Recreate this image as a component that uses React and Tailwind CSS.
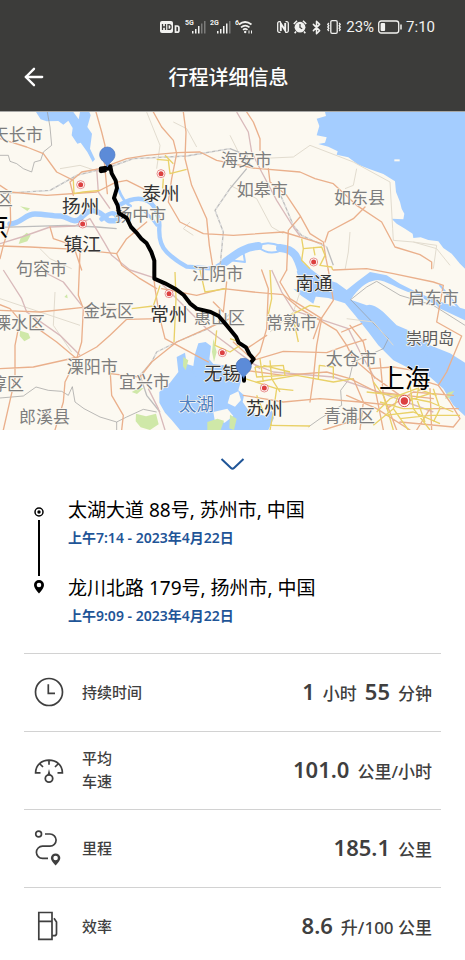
import { ArrowLeft, Bluetooth } from "lucide-react";

const cjk = "font-['Noto_Sans','Noto_Sans_CJK_SC',sans-serif]";

const labels = [
  { text: "天长市", x: -25, y: 68, kind: "county" },
  { text: "海安市", x: 662, y: 142, kind: "county" },
  { text: "如皋市", x: 710, y: 232, kind: "county" },
  { text: "如东县", x: 1002, y: 256, kind: "county" },
  { text: "区", x: -13, y: 260, kind: "county" },
  { text: "扬中市", x: 346, y: 307, kind: "county" },
  { text: "句容市", x: 48, y: 471, kind: "county" },
  { text: "江阴市", x: 577, y: 485, kind: "county" },
  { text: "溧水区", x: -18, y: 632, kind: "county" },
  { text: "金坛区", x: 249, y: 595, kind: "county" },
  { text: "惠山区", x: 582, y: 617, kind: "county" },
  { text: "常熟市", x: 798, y: 631, kind: "county" },
  { text: "启东市", x: 1223, y: 557, kind: "county" },
  { text: "太仓市", x: 977, y: 740, kind: "county" },
  { text: "溧阳市", x: 200, y: 764, kind: "county" },
  { text: "宜兴市", x: 357, y: 809, kind: "county" },
  { text: "淳区", x: -30, y: 814, kind: "county" },
  { text: "郎溪县", x: 57, y: 915, kind: "county" },
  { text: "青浦区", x: 972, y: 911, kind: "county" },
  { text: "崇明岛", x: 1218, y: 677, kind: "island" },
  { text: "太湖", x: 536, y: 877, kind: "lake" },
  { text: "扬州", x: 186, y: 281, kind: "city" },
  { text: "泰州", x: 427, y: 244, kind: "city" },
  { text: "镇江", x: 191, y: 397, kind: "city" },
  { text: "常州", x: 451, y: 606, kind: "city" },
  { text: "南通", x: 886, y: 512, kind: "city" },
  { text: "无锡", x: 611, y: 784, kind: "city" },
  { text: "苏州", x: 737, y: 889, kind: "city" },
  { text: "京", x: -51, y: 342, kind: "metro" },
  { text: "上海", x: 1137, y: 799, kind: "metro" },
];

const labelStyle = {
  county: "fill-[#7d7d7d] text-[51px]",
  island: "fill-[#5c5c5c] text-[48px]",
  lake: "fill-[#4f7fc0] text-[53px]",
  city: "fill-[#333333] text-[56px]",
  metro: "fill-black text-[77px]",
};

const cities = [
  [242, 218],
  [483, 185],
  [248, 336],
  [941, 450],
  [507, 545],
  [667, 722],
  [793, 828],
];

const Pin = ({ x, y }) => (
  <g transform={`translate(${x} ${y})`}>
    <path
      d="M0 0C-3-13-23-19-23-37A23 23 0 0 1 23-37C23-19 3-13 0 0Z"
      fill="#5c8bd8"
      stroke="#4a76bf"
      strokeWidth="2"
    />
  </g>
);

const TripMap = () => (
  <svg viewBox="0 0 1395 954" className="block w-full bg-[#fcf9f1]" role="img">
    {/* sea, rivers and lakes */}
    <g fill="#a4cdff">
      <path d="M975 0L978 12 950 20 958 42 950 70 980 76 975 92 955 96 985 104 1013 118 1010 128 1045 136 1075 158 1110 172 1150 186 1185 208 1188 240 1200 270 1205 290 1213 305 1210 322 1175 320 1190 335 1215 350 1238 365 1240 378 1262 376 1285 384 1315 388 1330 408 1355 425 1380 455 1395 470V0Z" />
      <path d="M108 0L122 22 140 28 175 27 190 38 205 26 218 48 215 70 232 95 242 92 262 120 278 150 285 142 270 110 276 65 262 45 272 10 268 0 240 0 236 22 220 0Z" />
      <path d="M893 440L910 474 890 478 905 530 930 552 985 558 1035 574 1065 610 1105 660 1135 700 1180 745 1230 770 1290 795 1330 830 1360 880 1395 912V752L1350 724 1290 700 1250 665 1190 640 1150 600 1110 560 1090 535 1130 508 1160 515 1200 535 1250 548 1310 585 1395 625V592L1330 572 1260 545 1200 515 1160 490 1110 480 1070 510 1040 534 1010 512 970 500Z" />
      <path d="M530 735L555 722 560 756 580 762 585 726 595 694 617 690 633 702 628 742 640 756 690 762 730 780 722 810 715 835 732 850 728 870 745 895 765 905 800 912 815 895 822 918 805 954H540L515 924 495 902 478 872 478 840 510 812 535 780Z" />
      <path d="M1245 717L1270 722 1290 736 1275 738ZM880 530L950 545 940 575 905 552Z" />
    </g>
    <path d="M1183 142h16v6h-16Z" fill="#fcf9f1" />
    <g fill="#fcf9f1">
      <path d="M1052 563C1075 530 1095 510 1130 504C1160 505 1190 530 1240 545L1310 580 1340 620 1380 650 1350 705C1290 694 1240 660 1190 630C1150 600 1120 570 1100 580Z" />
      <path d="M690 850l25-12 8 26-18 20-22-10ZM640 900l42-10 18 22-26 20-30-8ZM792 410l38-12 20 14-28 16Z" />
    </g>
    <g fill="none" stroke="#a4cdff" strokeLinecap="round" strokeLinejoin="round">
      <path strokeWidth="16" d="M30 336C65 334 75 306 105 306S160 313 180 312 220 338 240 320 270 285 300 303 310 330 350 326" />
      <path strokeWidth="13" d="M305 322Q340 290 350 314T360 278Q400 255 430 262T470 300 478 345Q475 395 500 420T560 464L640 470 690 440" />
      <path strokeWidth="8" d="M355 230Q370 270 392 282M302 320L360 325M470 340Q450 310 430 295" />
      <path strokeWidth="24" d="M676 450C715 420 740 404 775 402M840 408C885 412 892 435 905 478" />
      <path strokeWidth="6" d="M775 402Q800 385 842 402M775 405Q805 432 845 415M690 445L735 450 730 420M588 790L570 770M1320 520L1390 605" />
    </g>
    <g fill="#cfe8a8">
      <path d="M60 283l30 6-8 8ZM62 378l18-16 12 8-10 18-26 8ZM60 656l25 8 6 14-18 10-14-16ZM550 735l15 10-8 30-8-12ZM395 840l18-10 18-2-20 18ZM408 905l30 8 30-8 8 32-26 17-28-8-15-18ZM622 930l30-10 20 6-10 28h-40ZM640 680l10 40-8 30-6-30ZM690 908l20 12-8 34-14-5ZM1335 860l8-18 20-6-15 22ZM193 555l8-8 2 12Z" />
    </g>

    {/* boundaries and minor roads */}
    <g fill="none" strokeLinejoin="round">
      <path stroke="#999" strokeWidth="2" d="M142 0L150 45 155 100 130 120 122 145 103 150 95 180 70 170 50 155 30 148 25 130 0 130M0 858L70 852 108 825 145 835 185 838 205 850 217 824 225 870 252 890 300 915 350 930 380 915 430 892 470 900M350 930L350 954M1052 563L1100 525 1130 508M1052 563L1165 680 1150 710M1130 508L1200 550 1300 580 1395 640M1150 710L1060 750 1048 800 1022 835 1025 880 960 920 925 945" />
      <path stroke="#e2dccf" strokeWidth="3" d="M770 140L880 135 930 100 1060 150 1170 210 1178 350 1180 385 1240 390 1310 410 1350 460M1070 170L1060 220 1035 230M690 220L770 260 815 345 850 365M1050 360L1045 420 1035 474M570 330L550 350 580 370M165 540L160 640 215 720M520 30L560 50 590 105M180 170L240 160 300 180M690 70L720 130 760 170M120 410L150 440 215 470M0 560L90 590 240 640M1040 620L1120 630 1180 700M810 660L880 600 900 540M440 0L480 100 470 170M1240 390L1310 400 1300 470" />
      <path stroke="#bdbdbd" strokeWidth="4" d="M0 245L150 235 230 190 330 165 400 140 560 132 690 110 740 130 750 160M0 346L200 340 290 345 350 350M660 465L670 360 645 295 690 230 740 170M420 790L455 750 470 720 530 690 625 650 700 600M420 790L440 850 480 900M840 245L880 340 905 370 980 405 1000 460" />
      <path stroke="#fff" strokeWidth="2" strokeDasharray="9 9" d="M0 245L150 235 230 190 330 165 400 140 560 132 690 110M660 465L670 360 645 295 690 230M420 790L455 750 470 720 530 690 625 650 700 600M840 245L880 340 905 370 980 405" />
      <path stroke="#d9babb" strokeWidth="4" d="M0 395L65 375 150 345 225 342 270 320 315 395 335 430 390 474 470 500 540 570 620 650 780 770M10 474L65 560 80 600 180 670 240 730M120 474L190 510 245 580M710 0L745 60 755 120 785 180 830 265 880 345 900 372M815 474L845 540 880 595 1045 650 1080 720 1125 800M720 740L820 780 1000 795 1150 845 1300 900M445 830L475 890 495 954M290 170L295 240 330 290" />
    </g>

    {/* motorways */}
    <g fill="none" stroke="#eab08c" strokeWidth="4" strokeLinejoin="round" strokeLinecap="round">
      <path d="M288 0L305 60 315 100 313 150 322 245M0 80L80 105 130 125 170 180 220 205M460 0L485 45 520 85 530 125 515 200 505 270 540 330 610 365 700 370 850 360 965 395M550 0L558 60 555 140 575 220 620 320 628 400 640 474" />
      <path d="M0 220L30 240 140 250 290 240 345 212 380 205 440 235M220 250L210 210 245 180 300 170 380 140 440 130 530 122 600 120 650 145 760 168 900 180 945 200 1000 215 1070 280 1145 330 1185 405 1260 428 1295 450 1295 470" />
      <path d="M740 0L760 30 780 80 780 115M805 170L810 210 860 250 900 310 930 365 970 390 978 440 985 474M1095 285L1060 320 985 360 975 390M900 315L865 355 860 474M150 345L160 380 220 400 245 474M0 402L90 405 230 412 350 425 365 460M365 460L420 500 470 530M440 330L380 380 350 425M30 250L32 330 10 400 0 440" />
      <path d="M0 578L30 590 60 625 45 700 45 800 10 954M240 420L235 550 250 590 245 690 230 740 195 810 190 870 165 954M0 595L120 600 250 586 350 590M480 620L380 622 330 670 290 705 235 735 100 765 0 770M330 770L335 850 370 910 365 954M330 785L420 795 455 750 530 690 620 650 690 620M100 640L170 690 230 740" />
      <path d="M460 480L465 530 480 620 495 680 560 715 625 750M485 530L590 550 670 530 760 540 850 548 900 590 960 625 1010 655 1040 700 1060 740M785 474L805 530 800 650 780 720 735 770M860 474L840 510 870 560 965 620 950 700 940 800 930 870" />
      <path d="M700 690L760 745 850 718 980 722 1040 700 1098 682M735 775L850 790 980 780 1050 800 1130 840 1300 860M740 710L800 670M730 850L850 870 960 860 1080 870 1180 880M960 625L1000 565 985 474M960 625L940 680M640 570L670 600 680 510M1000 474L1100 470 1180 485 1300 510 1330 520 1310 630 1385 672 1340 780 1315 820M1025 660L1085 635M1050 640L1090 690 1125 830 1150 954" />
      <path d="M1060 800L1090 870 1080 954M1110 770L1180 765 1240 775M1140 740L1150 850 1190 954M1250 800L1315 820 1350 870 1380 920 1360 945 1200 930M1040 850L1130 890 1230 954M1290 830L1295 954M1060 740L1130 800 1200 850M970 954L1080 920M1160 890L1240 840 1360 850M1250 954L1290 890 1375 890" />
    </g>

    {/* expressways inside the cities */}
    <g fill="none" stroke="#e9d168" strokeWidth="4" strokeLinejoin="round">
      <path d="M470 142L505 145 510 185 560 172M495 130L520 155M490 200L488 230M220 205L222 245 250 240 300 235M905 380L910 410 965 405 975 430 960 460 995 465 998 474M910 410L905 445 930 470M940 405L945 430M395 590L460 582 480 520M525 480L528 560 522 690M600 474L615 540 680 530M650 655L645 700 690 720 720 700M810 474L815 560 800 630M880 620L895 690M870 610L930 580 960 585M690 680L720 690" />
      <path d="M765 765L850 760 855 790 770 795 765 765M780 740L790 810M810 745L815 800 840 840M830 830L820 900 810 954M735 800L830 830 880 835M955 800L958 760 1000 765 1000 800M770 810L890 790 1000 810 1060 800M790 760L870 780M810 940L930 942M770 850L790 900" />
      <path d="M1120 810L1150 850 1170 920 1180 954M1100 840L1190 850 1290 870 1360 900M1140 870L1210 890 1300 890M1155 910L1240 900 1320 935M1195 850L1180 890 1225 954M1230 820L1240 890 1290 954M1260 800L1250 860 1275 930M1130 900L1170 860 1250 830 1310 850M1120 940L1180 890M1200 920L1290 910 1380 910M1300 830L1320 890 1300 930M1210 870L1290 845" />
    </g>

    {cities.map(([x, y]) => (
      <g key={`${x}-${y}`}>
        <circle cx={x} cy={y} r="12" fill="#fff" stroke="#dc5a5a" strokeWidth="2" />
        <circle cx={x} cy={y} r="7.5" fill="#dc4040" />
      </g>
    ))}
    <circle cx="1213" cy="867" r="17" fill="#fff" stroke="#dc5a5a" strokeWidth="3" />
    <circle cx="1213" cy="867" r="11" fill="#dc4040" />

    <g className={cjk} stroke="#fcf9f1" strokeWidth="4" paintOrder="stroke">
      {labels.map(({ text, x, y, kind }) => (
        <text key={text} x={x} y={y} dy="0.38em" className={labelStyle[kind]}>
          {text}
        </text>
      ))}
    </g>

    {/* driven route */}
    <g fill="none" stroke="#000" strokeLinejoin="round" strokeLinecap="round">
      <path
        strokeWidth="12"
        d="M331 163L335 184 347 206 351 228 342 258 353 280 357 304 380 318 393 345 412 365 424 380 440 394 454 420 463 446 463 500 495 514 525 530 551 549 570 574 590 590 632 600 656 612 680 640 708 674 716 692 738 706 748 726 761 741 752 752"
      />
      <path strokeWidth="15" d="M304 171L326 168M304 176L314 174" />
      <path strokeWidth="12" d="M732 795L732 806" />
    </g>
    <Pin x={322} y={165} />
    <Pin x={731} y={799} />
  </svg>
);

const Signal = ({ label, weak }) => (
  <svg width="21" height="14" viewBox="0 0 21 14" fill="currentColor">
    <text x="0" y="5" className="font-['Roboto',sans-serif] text-[7px] font-bold">
      {label}
    </text>
    <path d="M7 11h1.500v2.500H7zM10 9h1.500v4.500H10zM13 6h1.500v7.500H13z" />
    <path d="M16 3.500h1.500v10H16z" opacity={weak ? 0.35 : 1} />
    <path d="M19 1h1.500v12.500H19z" opacity="0.35" />
  </svg>
);

const StatusBar = () => (
  <div className="flex h-[54px] items-center justify-end pr-[30px] text-[#f2f2f0]">
    <div className="mr-6 flex items-center gap-1">
      <svg width="21" height="14" viewBox="0 0 21 14">
        <rect x="0" y="1" width="13" height="12" rx="2" fill="currentColor" />
        <path d="M2.500 4v6M5.500 4v6M2.500 7h3M8 4.600v4.800h1a2 2 0 0 0 2-2v-.8a2 2 0 0 0-2-2Z" fill="none" stroke="#3c3c3a" strokeWidth="1.300" />
        <path d="M15.500 6v6.200h1.600a1.800 1.800 0 0 0 1.800-1.800V7.800A1.800 1.800 0 0 0 17.100 6Z" fill="none" stroke="currentColor" strokeWidth="1.700" />
      </svg>
      <Signal label="5G" weak />
      <Signal label="2G" />
      <svg width="18" height="14" viewBox="0 0 18 14" fill="none" stroke="currentColor" strokeWidth="1.700">
        <path d="M4 4.500q6-5 12.500 0M6 7.300q4.200-3.500 8.500 0M8 9.800q2.200-1.800 4.500 0" />
        <circle cx="10.200" cy="12" r="1.200" fill="currentColor" stroke="none" />
        <path d="M14 13.500v-3M16.500 10.500v3" strokeWidth="1" />
        <text x="0" y="5" className="fill-current stroke-none font-['Roboto',sans-serif] text-[7px] font-bold">
          6
        </text>
      </svg>
    </div>
    <div className="flex items-center gap-1">
      <svg width="12" height="12" viewBox="0 0 12 12" fill="none" stroke="currentColor">
        <path d="M3.500.7H2.200A1.500 1.500 0 0 0 .7 2.200v7.600a1.500 1.500 0 0 0 1.500 1.500h1.300M8.500 11.300h1.300a1.500 1.500 0 0 0 1.500-1.500V2.200A1.500 1.500 0 0 0 9.800.7H8.500" strokeWidth="1.300" />
        <path d="M3.800 10V2.500l4.400 7V2" strokeWidth="1.900" />
      </svg>
      <svg width="14" height="14" viewBox="0 0 14 14">
        <path d="M.8 4L4 .8M13.200 4L10 .8M3 11.500l-1.300 1.700M11 11.500l1.300 1.700" stroke="currentColor" strokeWidth="1.600" />
        <circle cx="7" cy="7.200" r="5.400" fill="currentColor" />
        <path d="M7 4v3.500l2.200 1.200" fill="none" stroke="#3c3c3a" strokeWidth="1.200" />
      </svg>
      <Bluetooth className="-mx-0.5" size={15} strokeWidth={2.4} />
      <svg width="16" height="14" viewBox="0 0 16 14" fill="none" stroke="currentColor" strokeWidth="1.300">
        <rect x="4.800" y=".7" width="6.400" height="12.600" rx="1.300" />
        <path d="M2.800 3L1.800 4.400l1 1.300-1 1.300 1 1.300-1 1.300 1 1.400M13.200 3l1 1.400-1 1.300 1 1.300-1 1.300 1 1.300-1 1.400" />
      </svg>
      <span className="font-['Roboto',sans-serif] text-[15px] leading-5">23%</span>
      <svg width="24" height="14" viewBox="0 0 24 14">
        <rect x=".7" y="1" width="20" height="12" rx="2.500" fill="none" stroke="currentColor" strokeWidth="1.300" />
        <rect x="2.600" y="3" width="4.500" height="8" rx="1" fill="currentColor" />
        <path d="M23 4.500v5" stroke="currentColor" strokeWidth="1.500" />
      </svg>
      <span className="font-['Roboto',sans-serif] text-[15px] leading-5">7:10</span>
    </div>
  </div>
);

const ClockIcon = () => (
  <svg width="30" height="30" viewBox="0 0 30 30" fill="none" stroke="currentColor" strokeWidth="1.700">
    <circle cx="15" cy="15" r="13.500" />
    <path d="M14.300 7.200v9.100h6.700" />
  </svg>
);

const SpeedIcon = () => (
  <svg width="30" height="30" viewBox="0 0 30 30" fill="none" stroke="currentColor" strokeWidth="1.700">
    <path d="M6.500 17.800H1.600C1.600 10 7.500 5.200 15 5.200S28.400 10 28.400 17.800H23.500M15 5.200v4.600M6 9l3 3M24 9l-3 3" />
    <circle cx="15" cy="23.500" r="3.700" strokeWidth="1.800" />
    <path d="M15 14l1.600 6.200h-3.200Z" fill="currentColor" stroke="none" />
  </svg>
);

const DistanceIcon = () => (
  <svg width="30" height="36" viewBox="0 0 30 36" fill="none" stroke="currentColor" strokeWidth="1.700">
    <circle cx="4.600" cy="4" r="2.900" />
    <path d="M11 4h5a6 6 0 0 1 0 12.200H8.500a6.100 6.100 0 0 0 0 12.200H14" />
    <path d="M21.600 35.600q-4.700-4.800-4.700-7.500a4.700 4.700 0 0 1 9.400 0q0 2.700-4.700 7.500Z" fill="currentColor" stroke="none" />
    <circle cx="21.600" cy="28" r="2.300" fill="#fff" stroke="none" />
  </svg>
);

const FuelIcon = () => (
  <svg width="30" height="30" viewBox="0 0 30 30" fill="none" stroke="currentColor" strokeWidth="1.700">
    <path d="M4.800 1.500h13.200v26.800H4.800ZM4.800 10.300H18M18 24.700h2.200q2.300 0 2.300-2.300V11L20 7.300" />
  </svg>
);

const stops = [
  { address: "太湖大道 88号, 苏州市, 中国", time: "上午7:14 - 2023年4月22日" },
  { address: "龙川北路 179号, 扬州市, 中国", time: "上午9:09 - 2023年4月22日" },
];

const stats = [
  { icon: <ClockIcon />, label: "持续时间", value: [["1", "小时"], ["55", "分钟"]] },
  { icon: <SpeedIcon />, label: "平均车速", value: [["101.0", "公里/小时"]] },
  { icon: <DistanceIcon />, label: "里程", value: [["185.1", "公里"]] },
  { icon: <FuelIcon />, label: "效率", value: [["8.6", "升/100 公里"]] },
];

const App = () => {
  return (
    <div className={`min-h-screen bg-white text-[#3f3f3f] ${cjk}`} lang="zh-CN">
      <header className="border-b border-[#a8a8a6] bg-[#3c3c3a]">
        <StatusBar />
        <div className="grid h-[57px] grid-cols-[48px_1fr_56px] items-start pt-2 text-white">
          <button type="button" aria-label="返回" className="flex h-[30px] items-center justify-end">
            <ArrowLeft size={28} strokeWidth={2} />
          </button>
          <h1 className="text-center text-[20px] leading-8 font-medium">行程详细信息</h1>
        </div>
      </header>

      <TripMap />

      <main className="px-6">
        <button type="button" aria-label="收起" className="mx-auto mt-[26px] flex h-4 w-8 items-center justify-center text-[#1f5597]">
          <svg width="26" height="14" viewBox="0 0 26 14" fill="none" stroke="currentColor" strokeWidth="2">
            <path d="M1.500 2L11 11q1.500 1.400 3 0L23.500 2" />
          </svg>
        </button>

        <ol className="pt-[22px]">
          {stops.map(({ address, time }, i) => (
            <li key={time} className="flex gap-[14px]">
              <div className="flex w-[30px] flex-col items-center">
                {i === 0 ? (
                  <>
                    <svg className="mt-[13px] shrink-0" width="10" height="10" viewBox="0 0 10 10">
                      <circle cx="5" cy="5" r="4" fill="none" stroke="#000" strokeWidth="1.500" />
                      <circle cx="5" cy="5" r="1.700" />
                    </svg>
                    <span className="mt-[3px] -mb-1 w-0.5 grow bg-black" />
                  </>
                ) : (
                  <svg className="mt-2 shrink-0" width="10" height="14" viewBox="0 0 10 14">
                    <path fillRule="evenodd" d="M5 13.600Q0 8 0 5a5 5 0 0 1 10 0Q10 8 5 13.600ZM5 7.300a2.300 2.300 0 1 0 0-4.600 2.300 2.300 0 0 0 0 4.600Z" />
                  </svg>
                )}
              </div>
              <div className={i === 0 ? "pb-[22px]" : "pb-[25px]"}>
                <p className="text-[19px] leading-8 text-black">{address}</p>
                <p className="text-[14px] leading-6 font-semibold text-[#1f5597]">{time}</p>
              </div>
            </li>
          ))}
        </ol>

        <dl>
          {stats.map(({ icon, label, value }) => (
            <div key={label} className="flex items-center border-t border-[#d2d2d2] pt-[15px] pr-[9px] pb-4 pl-2.5 last:pb-2">
              <div className="flex h-[46px] w-12 items-center">{icon}</div>
              <dt className={`text-[15px] leading-[23px] font-medium ${label === "平均车速" ? "w-8" : ""}`}>{label}</dt>
              <dd className="ml-auto flex gap-2 text-[17px] leading-6 font-medium">
                {value.map(([amount, unit]) => (
                  <span key={unit} className="flex items-baseline gap-2">
                    <span className="text-[22px] font-semibold">{amount}</span>
                    <span>{unit}</span>
                  </span>
                ))}
              </dd>
            </div>
          ))}
        </dl>
      </main>
    </div>
  );
};

export default App;
